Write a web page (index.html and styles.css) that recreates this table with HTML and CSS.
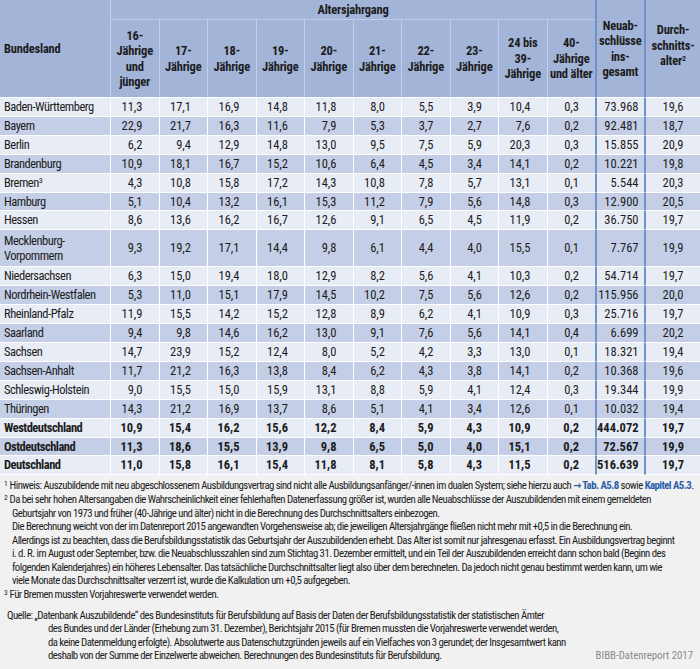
FILE: index.html
```html
<!DOCTYPE html>
<html lang="de">
<head>
<meta charset="utf-8">
<title>Neuabschlüsse nach Altersjahrgang</title>
<link rel="stylesheet" href="styles.css">
</head>
<body>
<div class="page">
<table class="tbl">
<colgroup>
<col class="c-name"><col class="c48"><col class="c48"><col class="c48"><col class="c48"><col class="c48"><col class="c48"><col class="c48"><col class="c48"><col class="c48"><col class="c48"><col class="c48"><col class="c-avg">
</colgroup>
<thead>
<tr class="h1">
<th rowspan="2" class="hname">Bundesland</th>
<th colspan="10" class="alt">Altersjahrgang</th>
<th rowspan="2" class="neu">Neuab-<br>schlüsse<br>ins-<br>gesamt</th>
<th rowspan="2" class="avg">Durch-<br>schnitts-<br>alter<span class="sup">2</span></th>
</tr>
<tr class="h2">
<th>16-<br>Jährige<br>und<br>jünger</th>
<th>17-<br>Jährige</th>
<th>18-<br>Jährige</th>
<th>19-<br>Jährige</th>
<th>20-<br>Jährige</th>
<th>21-<br>Jährige</th>
<th>22-<br>Jährige</th>
<th>23-<br>Jährige</th>
<th>24 bis<br>39-<br>Jährige</th>
<th>40-<br>Jährige<br>und älter</th>
</tr>
</thead>
<tbody>
<tr><td class="name">Baden-Württemberg</td><td>11,3</td><td>17,1</td><td>16,9</td><td>14,8</td><td>11,8</td><td>8,0</td><td>5,5</td><td>3,9</td><td>10,4</td><td>0,3</td><td class="neu">73.968</td><td class="avg">19,6</td></tr>
<tr><td class="name">Bayern</td><td>22,9</td><td>21,7</td><td>16,3</td><td>11,6</td><td>7,9</td><td>5,3</td><td>3,7</td><td>2,7</td><td>7,6</td><td>0,2</td><td class="neu">92.481</td><td class="avg">18,7</td></tr>
<tr><td class="name">Berlin</td><td>6,2</td><td>9,4</td><td>12,9</td><td>14,8</td><td>13,0</td><td>9,5</td><td>7,5</td><td>5,9</td><td>20,3</td><td>0,3</td><td class="neu">15.855</td><td class="avg">20,9</td></tr>
<tr><td class="name">Brandenburg</td><td>10,9</td><td>18,1</td><td>16,7</td><td>15,2</td><td>10,6</td><td>6,4</td><td>4,5</td><td>3,4</td><td>14,1</td><td>0,2</td><td class="neu">10.221</td><td class="avg">19,8</td></tr>
<tr><td class="name">Bremen<span class="sup">3</span></td><td>4,3</td><td>10,8</td><td>15,8</td><td>17,2</td><td>14,3</td><td>10,8</td><td>7,8</td><td>5,7</td><td>13,1</td><td>0,1</td><td class="neu">5.544</td><td class="avg">20,3</td></tr>
<tr><td class="name">Hamburg</td><td>5,1</td><td>10,4</td><td>13,2</td><td>16,1</td><td>15,3</td><td>11,2</td><td>7,9</td><td>5,6</td><td>14,8</td><td>0,3</td><td class="neu">12.900</td><td class="avg">20,5</td></tr>
<tr><td class="name">Hessen</td><td>8,6</td><td>13,6</td><td>16,2</td><td>16,7</td><td>12,6</td><td>9,1</td><td>6,5</td><td>4,5</td><td>11,9</td><td>0,2</td><td class="neu">36.750</td><td class="avg">19,7</td></tr>
<tr><td class="name two">Mecklenburg-<br>Vorpommern</td><td>9,3</td><td>19,2</td><td>17,1</td><td>14,4</td><td>9,8</td><td>6,1</td><td>4,4</td><td>4,0</td><td>15,5</td><td>0,1</td><td class="neu">7.767</td><td class="avg">19,9</td></tr>
<tr><td class="name">Niedersachsen</td><td>6,3</td><td>15,0</td><td>19,4</td><td>18,0</td><td>12,9</td><td>8,2</td><td>5,6</td><td>4,1</td><td>10,3</td><td>0,2</td><td class="neu">54.714</td><td class="avg">19,7</td></tr>
<tr><td class="name">Nordrhein-Westfalen</td><td>5,3</td><td>11,0</td><td>15,1</td><td>17,9</td><td>14,5</td><td>10,2</td><td>7,5</td><td>5,6</td><td>12,6</td><td>0,2</td><td class="neu">115.956</td><td class="avg">20,0</td></tr>
<tr><td class="name">Rheinland-Pfalz</td><td>11,9</td><td>15,5</td><td>14,2</td><td>15,2</td><td>12,8</td><td>8,9</td><td>6,2</td><td>4,1</td><td>10,9</td><td>0,3</td><td class="neu">25.716</td><td class="avg">19,7</td></tr>
<tr><td class="name">Saarland</td><td>9,4</td><td>9,8</td><td>14,6</td><td>16,2</td><td>13,0</td><td>9,1</td><td>7,6</td><td>5,6</td><td>14,1</td><td>0,4</td><td class="neu">6.699</td><td class="avg">20,2</td></tr>
<tr><td class="name">Sachsen</td><td>14,7</td><td>23,9</td><td>15,2</td><td>12,4</td><td>8,0</td><td>5,2</td><td>4,2</td><td>3,3</td><td>13,0</td><td>0,1</td><td class="neu">18.321</td><td class="avg">19,4</td></tr>
<tr><td class="name">Sachsen-Anhalt</td><td>11,7</td><td>21,2</td><td>16,3</td><td>13,8</td><td>8,4</td><td>6,2</td><td>4,3</td><td>3,8</td><td>14,1</td><td>0,2</td><td class="neu">10.368</td><td class="avg">19,6</td></tr>
<tr><td class="name">Schleswig-Holstein</td><td>9,0</td><td>15,5</td><td>15,0</td><td>15,9</td><td>13,1</td><td>8,8</td><td>5,9</td><td>4,1</td><td>12,4</td><td>0,3</td><td class="neu">19.344</td><td class="avg">19,9</td></tr>
<tr><td class="name">Thüringen</td><td>14,3</td><td>21,2</td><td>16,9</td><td>13,7</td><td>8,6</td><td>5,1</td><td>4,1</td><td>3,4</td><td>12,6</td><td>0,1</td><td class="neu">10.032</td><td class="avg">19,4</td></tr>
<tr class="tot"><td class="name">Westdeutschland</td><td>10,9</td><td>15,4</td><td>16,2</td><td>15,6</td><td>12,2</td><td>8,4</td><td>5,9</td><td>4,3</td><td>10,9</td><td>0,2</td><td class="neu">444.072</td><td class="avg">19,7</td></tr>
<tr class="tot"><td class="name">Ostdeutschland</td><td>11,3</td><td>18,6</td><td>15,5</td><td>13,9</td><td>9,8</td><td>6,5</td><td>5,0</td><td>4,0</td><td>15,1</td><td>0,2</td><td class="neu">72.567</td><td class="avg">19,9</td></tr>
<tr class="tot"><td class="name">Deutschland</td><td>11,0</td><td>15,8</td><td>16,1</td><td>15,4</td><td>11,8</td><td>8,1</td><td>5,8</td><td>4,3</td><td>11,5</td><td>0,2</td><td class="neu">516.639</td><td class="avg">19,7</td></tr>
</tbody>
</table>

<div class="notes">
<div class="fn"><span class="mk">1</span> Hinweis: Auszubildende mit neu abgeschlossenem Ausbildungsvertrag sind nicht alle Ausbildungsanfänger/-innen im dualen System; siehe hierzu auch <span class="lnk">→ Tab. A5.8</span> sowie <span class="lnk">Kapitel A5.3</span>.</div>
<div class="fn"><span class="mk">2</span> Da bei sehr hohen Altersangaben die Wahrscheinlichkeit einer fehlerhaften Datenerfassung größer ist, wurden alle Neuabschlüsse der Auszubildenden mit einem gemeldeten<br>Geburtsjahr von 1973 und früher (40-Jährige und älter) nicht in die Berechnung des Durchschnittsalters einbezogen.<br>Die Berechnung weicht von der im Datenreport 2015 angewandten Vorgehensweise ab; die jeweiligen Altersjahrgänge fließen nicht mehr mit +0,5 in die Berechnung ein.<br>Allerdings ist zu beachten, dass die Berufsbildungsstatistik das Geburtsjahr der Auszubildenden erhebt. Das Alter ist somit nur jahresgenau erfasst. Ein Ausbildungsvertrag beginnt<br>i. d. R. im August oder September, bzw. die Neuabschlusszahlen sind zum Stichtag 31. Dezember ermittelt, und ein Teil der Auszubildenden erreicht dann schon bald (Beginn des<br>folgenden Kalenderjahres) ein höheres Lebensalter. Das tatsächliche Durchschnittsalter liegt also über dem berechneten. Da jedoch nicht genau bestimmt werden kann, um wie<br>viele Monate das Durchschnittsalter verzerrt ist, wurde die Kalkulation um +0,5 aufgegeben.</div>
<div class="fn"><span class="mk">3</span> Für Bremen mussten Vorjahreswerte verwendet werden.</div>
<div class="src">
<div class="src-text">Quelle: „Datenbank Auszubildende“ des Bundesinstituts für Berufsbildung auf Basis der Daten der Berufsbildungsstatistik der statistischen Ämter<br>des Bundes und der Länder (Erhebung zum 31. Dezember), Berichtsjahr 2015 (für Bremen mussten die Vorjahreswerte verwendet werden,<br>da keine Datenmeldung erfolgte). Absolutwerte aus Datenschutzgründen jeweils auf ein Vielfaches von 3 gerundet; der Insgesamtwert kann<br>deshalb von der Summe der Einzelwerte abweichen. Berechnungen des Bundesinstituts für Berufsbildung.</div>
<div class="brand">BIBB-Datenreport 2017</div>
</div>
</div>
</div>
</body>
</html>
```

FILE: styles.css
```css
html, body {
  margin: 0;
  padding: 0;
  background: #ffffff;
}

body {
  font-family: "Liberation Sans Narrow", "Roboto Condensed", "DejaVu Sans Condensed", Roboto, "Liberation Sans", sans-serif;
  font-stretch: 75%;
  color: #1c1c1c;
}

.page {
  width: 700px;
}

.tbl {
  width: 700px;
  border-collapse: separate;
  border-spacing: 0;
  table-layout: fixed;
  font-size: 12.5px;
}

.c-name { width: 110px; }
.c48 { width: 48.5px; }
.c-avg { width: 57px; }

.tbl th {
  background: #a2b4d8;
  font-weight: 700;
  text-align: center;
  vertical-align: middle;
  padding: 0;
  line-height: 15.5px;
  letter-spacing: -0.2px;
  border-left: 1px solid #c3cfe8;
  border-bottom: 1px solid #c3cfe8;
}

.tbl th.hname {
  text-align: left;
  padding-left: 4px;
  border-left: 0;
  border-bottom: 1px solid #ffffff;
}

.h1 th { height: 19px; }
.h2 th { height: 77px; border-bottom: 1px solid #ffffff; }

.tbl th.neu,
.tbl th.avg {
  border-left: 2px solid #7192c9;
  border-bottom: 1px solid #ffffff;
}

.tbl th.avg {
  padding-bottom: 6px;
}

.tbl td {
  padding: 0 16px 0 0;
  text-align: right;
  vertical-align: middle;
  line-height: 17.9px;
  height: 17.9px;
  border-left: 1px solid #ffffff;
  border-bottom: 1px solid #ffffff;
  background: #e8ecf5;
  white-space: nowrap;
}

.tbl tbody tr:nth-child(even) td {
  background: #c4cfe7;
}

.tbl td.name {
  text-align: left;
  padding: 0 0 0 4px;
  border-left: 0;
  letter-spacing: -0.5px;
}

.tbl td.two {
  line-height: 15px;
  padding-top: 3px;
  padding-bottom: 3px;
}

.tbl td.neu {
  border-left: 2px solid #7192c9;
  padding-right: 5px;
}

.tbl td.avg {
  border-left: 2px solid #7192c9;
  text-align: center;
  padding-right: 0;
}

.tbl tr.tot td {
  font-weight: 700;
}

.sup {
  font-size: 8px;
  vertical-align: 4px;
  line-height: 0;
  letter-spacing: 0;
}

.notes {
  background: #f1f1f1;
  padding: 4px 7px 6px 0;
  font-size: 10.8px;
  line-height: 13.6px;
  letter-spacing: -0.56px;
  color: #1c1c1c;
}

.fn {
  padding-left: 12px;
  text-indent: -8px;
  white-space: nowrap;
}

.mk {
  font-size: 7.5px;
  vertical-align: 3px;
  line-height: 0;
  letter-spacing: 0;
}

.lnk {
  color: #2d5ea9;
  font-weight: 700;
}

.src {
  display: flex;
  justify-content: space-between;
  align-items: flex-end;
  margin-top: 7px;
}

.src-text {
  padding-left: 48px;
  text-indent: -41px;
  white-space: nowrap;
}

.brand {
  color: #8a8a8a;
  white-space: nowrap;
  letter-spacing: 0;
}
```
